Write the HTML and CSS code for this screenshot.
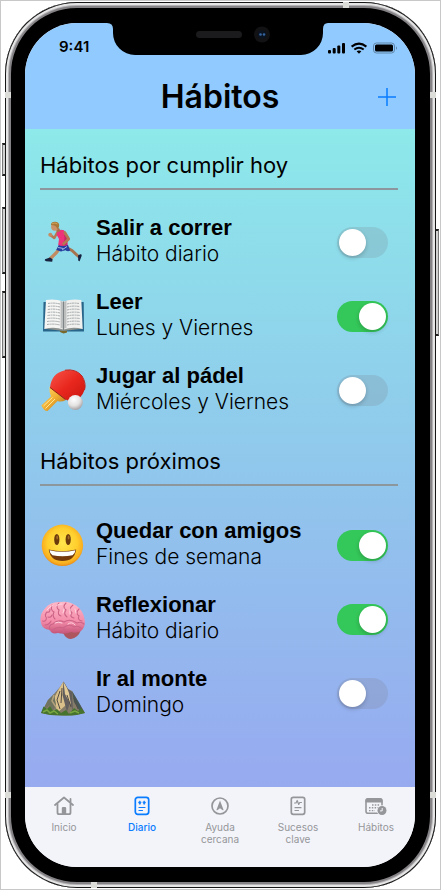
FILE: index.html
```html
<!DOCTYPE html>
<html lang="es">
<head>
<meta charset="utf-8">
<meta name="viewport" content="width=device-width, initial-scale=1">
<title>Hábitos</title>
<link rel="stylesheet" href="styles.css">
</head>
<body>
<div class="phone">
  <span class="key key-mute"></span>
  <span class="key key-up"></span>
  <span class="key key-down"></span>
  <span class="key key-power"></span>
  <span class="band band-top"></span>
  <span class="band band-bottom"></span>
  <span class="band band-left-a"></span>
  <span class="band band-left-b"></span>
  <span class="band band-right-a"></span>
  <span class="band band-right-b"></span>

  <div class="screen">
    <header class="header">
      <div class="status">
        <time class="clock">9:41</time>
        <svg class="notch" viewBox="0 0 222 32" aria-hidden="true">
          <path d="M1 0Q7 0 7 6V10A22 22 0 0 0 29 32H195A22 22 0 0 0 217 10V6Q217 0 222 0Z" fill="#000"/>
          <rect x="90" y="8" width="46" height="7" rx="3.500" fill="#1b1b1d"/>
          <circle cx="156" cy="11.500" r="8" fill="#121214"/>
          <circle cx="156" cy="11.500" r="4" fill="#0a1322"/>
          <circle cx="154.500" cy="11.500" r="1.300" fill="#36649c"/>
          <circle cx="158" cy="11.500" r="1.300" fill="#36649c"/>
        </svg>
        <svg class="signals" viewBox="0 0 70 12" aria-hidden="true">
          <rect x="0" y="8" width="3" height="3.500" rx="1"/>
          <rect x="4.700" y="6" width="3" height="5.500" rx="1"/>
          <rect x="9.300" y="3.500" width="3" height="8" rx="1"/>
          <rect x="14" y="1" width="3" height="10.500" rx="1"/>
          <g fill="none" stroke="#000" stroke-width="2">
            <path d="M23.600 4.600Q31-1.400 38.400 4.600"/>
            <path d="M26.300 7.500Q31 3.900 35.700 7.500"/>
          </g>
          <path d="M28.600 9.300Q31 7.500 33.400 9.300L31 11.800Z"/>
          <rect x="45.500" y="1" width="21" height="10" rx="3" fill="none" stroke="#5f86a8"/>
          <rect x="47" y="2.500" width="18" height="7" rx="1.500"/>
          <path d="M68 4.200Q70 6 68 7.800Z" fill="#5f86a8"/>
        </svg>
      </div>
      <div class="titlebar">
        <h1>Hábitos</h1>
        <button class="add" type="button" aria-label="Añadir hábito">
          <svg viewBox="0 0 18 18"><path d="M9 0V18M0 9H18" stroke="#0a7cff" stroke-width="1.500"/></svg>
        </button>
      </div>
    </header>

    <main class="content">
      <section class="today">
        <h2>Hábitos por cumplir hoy</h2>
        <ul class="habits">
          <li class="habit">
            <svg class="emoji" viewBox="0 -1 46 46" aria-hidden="true">
              <g fill="none" stroke-linecap="round" stroke-linejoin="round">
                <path d="M26.500 27.500L32 30.500L38.500 36.500" stroke="#a87450" stroke-width="3"/>
                <path d="M19.500 28.500L16.500 32.500L10 39" stroke="#c18a60" stroke-width="3.200"/>
                <path d="M17.500 12L14.300 18L11 15.500" stroke="#b57a53" stroke-width="2.600"/>
              </g>
              <path d="M38 35.500L40.200 34.300Q42 33.600 41.600 36L39.600 41.300Q37.800 41.500 38.200 39Z" fill="#17223f"/>
              <path d="M10 37.600L12.600 39.300L12.200 41.700L6 41.200Q4 40.300 5 39.200Z" fill="#17223f"/>
              <path d="M19 24.500L28 25L30.200 30.500Q28 32 25.500 30.300L21 31.500L16.200 30Z" fill="#263f9f"/>
              <path d="M18 27.500L23.500 28.500M22 30L27 26.500" stroke="#9fb5e5" stroke-width="1"/>
              <path d="M17 11.200Q20 8.700 24 10.200L27.200 15.500L27.500 25Q23 27 18.200 25L19 19L16.700 15Z" fill="#ed3379"/>
              <path d="M24 15Q25.500 20 22 25.500L27.400 25L27 15Z" fill="#c9286a"/>
              <path d="M24.800 12.500L28.700 19L23.700 23.700" fill="none" stroke="#b47953" stroke-width="2.800" stroke-linecap="round" stroke-linejoin="round"/>
              <circle cx="10.300" cy="14.800" r="2" fill="#c58b63"/>
              <path d="M15.500 9L19 8L20.500 11L17.500 12.500Z" fill="#a96f4c"/>
              <ellipse cx="14.700" cy="6.700" rx="3.600" ry="4.100" fill="#cc936a"/>
              <path d="M11 5Q11 1.500 15.500 1.700Q20 2 19 7L17.300 9.300Q16.500 5 11 5Z" fill="#a87838"/>
              <path d="M12 3.800Q15 2 17.500 4" stroke="#d1a458" fill="none"/>
            </svg>
            <label class="text" for="correr"><b>Salir a correr</b><span>Hábito diario</span></label>
            <input class="switch" type="checkbox" id="correr">
          </li>
          <li class="habit">
            <svg class="emoji" viewBox="0 -1 46 46" aria-hidden="true">
              <path d="M3.500 8L43.700 8L44 37.500L27 37.500Q23.500 39.500 20 37.500L3 37.500Z" fill="#28658a"/>
              <path d="M20 36.500H27V38.500L23.500 39.500L20 38Z" fill="#7a692c"/>
              <path d="M4.300 34.800L7 31.500H40.500L42.700 34.800L25 36.800H22Z" fill="#8c928f"/>
              <path d="M6 6Q15 4.500 23.500 7.500V35.500Q14 32.500 4.300 35Z" fill="#f5f5f3"/>
              <path d="M41.300 6Q32 4.500 23.500 7.500V35.500Q33 32.500 42.700 35Z" fill="#f0f0ee"/>
              <path d="M20.500 7Q23 7 23.500 9Q24 7 26.500 7V34Q24 34 23.500 36Q23 34 20.500 34Z" fill="#bdbfbf"/>
              <path d="M23.500 7.500V36" stroke="#7e8587" stroke-width="1"/>
              <path d="M8 9.500Q14 8.500 20 10M7.900 12.500Q14 11.500 20 13M7.800 15.500Q14 14.500 20 16M7.600 18.500Q14 17.500 20 19M7.500 21.500Q14 20.500 20 22M7.300 24.500Q14 23.500 20 25M7.100 27.500Q14 26.500 20 28M7 30.500Q14 29.500 20 31M27 10Q33 8.500 39 9.500M27 13Q33 11.500 39.200 12.500M27 16Q33 14.500 39.400 15.500M27 19Q33 17.500 39.500 18.500M27 22Q33 20.500 39.700 21.500M27 25Q33 23.500 39.800 24.500M27 28Q33 26.500 40 27.500M27 31Q33 29.500 40 30.500" fill="none" stroke="#a4a9ab" stroke-width="1" stroke-dasharray="2.500 .6 1.500 .5"/>
            </svg>
            <label class="text" for="leer"><b>Leer</b><span>Lunes y Viernes</span></label>
            <input class="switch" type="checkbox" id="leer" checked>
          </li>
          <li class="habit">
            <svg class="emoji" viewBox="0 -1 46 46" aria-hidden="true">
              <defs>
                <linearGradient id="rubber" x1="0" y1="0" x2="1" y2="1"><stop offset="0" stop-color="#f6564b"/><stop offset=".5" stop-color="#e9281f"/><stop offset="1" stop-color="#c8150f"/></linearGradient>
                <linearGradient id="wood" x1="0" y1="0" x2="1" y2="1"><stop offset="0" stop-color="#ffdf72"/><stop offset=".5" stop-color="#f1b033"/><stop offset="1" stop-color="#a96413"/></linearGradient>
                <radialGradient id="ball" cx=".4" cy=".3" r=".7"><stop offset="0" stop-color="#fff"/><stop offset=".6" stop-color="#e4e1e1"/><stop offset="1" stop-color="#a9a3a5"/></radialGradient>
              </defs>
              <path d="M9.500 18.500L26 32Q21 34.500 17.500 33L7.500 43Q4.500 43.500 1.300 37.500L11 28.500Q9 24 9.500 18.500Z" fill="url(#wood)"/>
              <path d="M3.500 38L12.500 29.500M5.500 40.500L15 31" stroke="#ffe795" stroke-width="1"/>
              <path d="M10 19.500Q11.500 5 25 2.200Q36 .5 42 8Q46.500 15.500 44.500 22Q41.500 30.500 35 32Q30 34 25.500 31.500Z" fill="url(#rubber)"/>
              <path d="M10 19.500L25.500 31.500" stroke="#8d2516" stroke-width="1"/>
              <path d="M25 2.200Q36 .5 42 8Q46.500 15.500 44.500 22" fill="none" stroke="#bf2822" stroke-width="1"/>
              <circle cx="35.300" cy="34.500" r="7.500" fill="url(#ball)"/>
            </svg>
            <label class="text" for="padel"><b>Jugar al pádel</b><span>Miércoles y Viernes</span></label>
            <input class="switch" type="checkbox" id="padel">
          </li>
        </ul>
      </section>

      <section class="upcoming">
        <h2>Hábitos próximos</h2>
        <ul class="habits">
          <li class="habit">
            <svg class="emoji" viewBox="0 -1 46 46" aria-hidden="true">
              <defs><radialGradient id="face" cx=".5" cy=".45" r=".55"><stop offset="0" stop-color="#ffe64c"/><stop offset=".65" stop-color="#ffcf2d"/><stop offset=".9" stop-color="#f9ad20"/><stop offset="1" stop-color="#e98b15"/></radialGradient></defs>
              <circle cx="22.400" cy="22.300" r="20.700" fill="url(#face)"/>
              <ellipse cx="16.800" cy="16.500" rx="2.600" ry="5.600" fill="#6b3b0c"/>
              <ellipse cx="28.200" cy="16.500" rx="2.600" ry="5.600" fill="#6b3b0c"/>
              <ellipse cx="17.200" cy="14.500" rx=".9" ry="2" fill="#a36a28"/>
              <ellipse cx="28.600" cy="14.500" rx=".9" ry="2" fill="#a36a28"/>
              <path d="M8.700 26.500Q22.400 30 36.200 26.500Q34.500 38 22.400 38Q10.500 38 8.700 26.500Z" fill="#743a0b"/>
              <path d="M9.500 27.200Q22.400 30.300 35.400 27.200Q35 31 32.500 32.300Q22.400 34 12.500 32.300Q10 31 9.500 27.200Z" fill="#fff"/>
            </svg>
            <label class="text" for="amigos"><b>Quedar con amigos</b><span>Fines de semana</span></label>
            <input class="switch" type="checkbox" id="amigos" checked>
          </li>
          <li class="habit">
            <svg class="emoji" viewBox="0 -1 46 46" aria-hidden="true">
              <defs><linearGradient id="cortex" x1="0" y1="0" x2="0" y2="1"><stop offset="0" stop-color="#ffb9c9"/><stop offset=".6" stop-color="#f48dab"/><stop offset="1" stop-color="#c45478"/></linearGradient></defs>
              <path d="M24 32Q32 29 41 33Q38 41 31 42Q26 42 23 36Z" fill="#ad5660"/>
              <path d="M1 26Q-1 18 4.500 12Q10 4.500 20 5Q29 3.500 36 8.500Q43 13 44.500 22Q46 30 41 34Q36 37 31 35Q25 38 18 36Q11 37.500 10 33Q2 32 1 26Z" fill="url(#cortex)"/>
              <path d="M2.500 24Q6 25 6.500 21Q4 18 7 15Q10 16 10 12M12 8Q10 13 14 15Q12 19 15 22M19 6Q15 10 19 13Q17 18 21 19M26 6Q22 10 26 13Q23 17 27 20M33 8Q28 12 32 16Q29 20 34 21M39 12Q35 16 39 19Q37 23 42 24M10 33Q8 28 13 27Q18 22 24 25Q30 21 37 26Q41 24 44 27M12 33Q18 29 23 31Q29 26 34 30Q38 28 41 31M5 28Q9 28 11 24M8 20Q11 21 12 18M24 35Q22 33 25 32" fill="none" stroke="#cc6488" stroke-width="1.100" stroke-linecap="round"/>
              <path d="M7 13Q10 9 13 8M16 9Q19 6 22 7M23 16L24 12M30 17L30 12M36 16L35 12M15 26Q18 24 22 26M28 27Q32 24 35 28" fill="none" stroke="#ffd4de" stroke-width="1" stroke-linecap="round"/>
            </svg>
            <label class="text" for="reflexionar"><b>Reflexionar</b><span>Hábito diario</span></label>
            <input class="switch" type="checkbox" id="reflexionar" checked>
          </li>
          <li class="habit">
            <svg class="emoji" viewBox="0 -1 46 46" aria-hidden="true">
              <path d="M1 42L8 29L14 23L20 16L23.500 10.500L28 18L32 20L38 30L45 42Q35 45 23 44.500Q10 44.500 1 42Z" fill="#847b68"/>
              <path d="M23.500 10.500L19.500 17L14.500 26L17 42L26 34L24 22Z" fill="#d9bf89"/>
              <path d="M23.500 10.500L22.500 24L27 41L30 31L33 40L32 21L28 18Z" fill="#625f5e"/>
              <path d="M23.500 11L25 23L31 34L29 22L27 17Z" fill="#e3cb98"/>
              <path d="M32 20L34 31L41 42L44.500 41.500L38 30Z" fill="#465757"/>
              <path d="M14 23L8 29L3 39L10 34L12 41L16 34Z" fill="#70735f"/>
              <path d="M14 24L12 30L16 36" fill="none" stroke="#b4a27c" stroke-width="1.500"/>
              <path d="M20 20L17 29L20 38M22 17L21 32M27 24L31 36M34 27L38 38" fill="none" stroke="#554d45" stroke-width="1"/>
              <path d="M1 42L3.500 35.500L7 38L10 35L13 40L17 38L21 42L26 39L29 43L34 37L38 40L41 37L45 42Q36 45 23 44.500Q9 44.500 1 42Z" fill="#46732d"/>
              <path d="M3 41L7 39L10 42L14 40L18 43M30 42L35 40L39 42" fill="none" stroke="#78a641" stroke-width="1.500"/>
            </svg>
            <label class="text" for="monte"><b>Ir al monte</b><span>Domingo</span></label>
            <input class="switch" type="checkbox" id="monte">
          </li>
        </ul>
      </section>
    </main>

    <nav class="tabs">
      <a class="tab" href="#inicio">
        <svg viewBox="0 0 20 20" aria-hidden="true"><g fill="none" stroke="currentColor" stroke-width="1.800" stroke-linecap="round" stroke-linejoin="round"><path d="M1 9L10 1.500L19 9"/><path d="M3.500 8V16.500Q3.500 18.200 5 18.200H15Q16.500 18.200 16.500 16.500V8"/><path d="M16.500 3V6"/></g><path d="M7.800 18V12Q7.800 11 9 11H11Q12.200 11 12.200 12V18Z" fill="currentColor"/></svg>
        <span>Inicio</span>
      </a>
      <a class="tab current" href="#diario" aria-current="page">
        <svg viewBox="0 0 20 20" aria-hidden="true"><g fill="none" stroke="currentColor" stroke-width="1.700" stroke-linecap="round"><rect x="3.300" y="1.300" width="13.400" height="17" rx="2.500"/><path d="M7 11.500H13M7 14.500H10.500" stroke-width="1.200"/></g><path d="M7.800 4.800L8.300 5.800L9.300 6.300L8.500 7L8.300 8.200H7.300L7.100 7L6.300 6.300L7.300 5.800ZM12.200 4.800L12.700 5.800L13.700 6.300L12.900 7L12.700 8.200H11.700L11.500 7L10.700 6.300L11.700 5.800Z" fill="currentColor" stroke="currentColor" stroke-width=".6"/></svg>
        <span>Diario</span>
      </a>
      <a class="tab" href="#ayuda">
        <svg viewBox="0 0 20 20" aria-hidden="true"><circle cx="10" cy="10" r="8" fill="none" stroke="currentColor" stroke-width="1.700"/><path d="M10 4.500L13.500 13.700Q13.500 14.500 12.700 14.200L10 12.300L7.300 14.200Q6.500 14.500 6.500 13.700Z" fill="currentColor"/></svg>
        <span>Ayuda cercana</span>
      </a>
      <a class="tab" href="#sucesos">
        <svg viewBox="0 0 20 20" aria-hidden="true"><g fill="none" stroke="currentColor" stroke-width="1.700" stroke-linecap="round" stroke-linejoin="round"><rect x="3.300" y="1.300" width="13.400" height="17" rx="2"/><path d="M6.500 7H8L9.200 4.500L10.700 8.500L11.700 6.500H13.500M7 11.700H13M7 14.500H10.500" stroke-width="1.200"/></g></svg>
        <span>Sucesos clave</span>
      </a>
      <a class="tab" href="#habitos">
        <svg class="wide" viewBox="0 0 22 20" aria-hidden="true"><rect x="1" y="2.900" width="16" height="14.400" rx="2" fill="none" stroke="currentColor" stroke-width="1.600"/><path d="M.5 6.500V4.500Q.5 2.200 2.800 2.200H15.200Q17.500 2.200 17.500 4.500V6.500Z" fill="currentColor"/><path d="M7 9H15M4 11.800H13M4 14.600H10" stroke="currentColor" stroke-width="1.400" stroke-dasharray="1.500 1.300"/><circle cx="17" cy="14.500" r="5.200" fill="#f3f4f9"/><circle cx="17" cy="14.500" r="4.500" fill="currentColor"/><path d="M17.200 12V14.900H15" fill="none" stroke="#f3f4f9" stroke-width="1"/></svg>
        <span>Hábitos</span>
      </a>
    </nav>
  </div>
</div>
</body>
</html>
```
FILE: styles.css
```css
* {
  box-sizing: border-box;
}

body {
  margin: 0;
  min-height: 100vh;
  display: flex;
  padding: 1px 4px 1px 4px;
  border: 1px solid #c8c8c8;
  background: #fff;
  color: #000;
  font-family: Inter, "Liberation Sans", sans-serif;
}

.phone {
  position: relative;
  flex: 1;
  display: flex;
  padding: 21px 21px 21px 20px;
  border-radius: 72px;
  background: #000;
  box-shadow:
    inset 0 0 0 1px #161616,
    inset 0 0 0 3px #e6e6e6,
    inset 0 0 0 4px #b4b2b4,
    inset 0 0 0 6px #858285;
}

/* Side buttons and antenna bands of the case */
.key {
  position: absolute;
  left: -3px;
  width: 3px;
  border: solid #222;
  border-width: 2px 0 2px 1px;
  border-left-color: #777;
  background: #d2d2d2;
}

.key-mute { top: 141px; height: 33px; }
.key-up { top: 205px; height: 67px; }
.key-down { top: 289px; height: 67px; }

.key-power {
  left: auto;
  right: -3px;
  top: 227px;
  height: 107px;
  border-width: 2px 1px 2px 0;
  border-right-color: #777;
}

.band {
  position: absolute;
  width: 6px;
  height: 6px;
  background: #dcdcd8;
}

.band-top { top: 0; right: 87px; }
.band-bottom { bottom: 0; left: 86px; }
.band-left-a { left: 0; top: 90px; }
.band-left-b { left: 0; bottom: 90px; }
.band-right-a { right: 0; top: 90px; }
.band-right-b { right: 0; bottom: 90px; }

.screen {
  flex: 1;
  display: flex;
  flex-direction: column;
  overflow: hidden;
  border-radius: 52px;
  background: #f3f4f9;
}

.header {
  height: 106px;
  background: #90cafe;
}

.status {
  display: grid;
  grid-template-columns: 1fr 222px 1fr;
  height: 42px;
}

.clock {
  padding: 15px 0 0 34px;
  font-size: 15px;
  line-height: 18px;
  font-weight: 600;
}

.notch {
  width: 222px;
  height: 32px;
}

.signals {
  justify-self: end;
  width: 70px;
  height: 12px;
  margin: 19px 17px 0 0;
  overflow: visible;
}

.titlebar {
  display: grid;
  grid-template-columns: 42px 1fr 42px;
  align-items: center;
  height: 64px;
}

h1 {
  grid-column: 2;
  margin: 0;
  text-align: center;
  font-size: 32px;
  line-height: 40px;
  font-weight: 600;
}

.add {
  display: flex;
  width: 24px;
  padding: 3px;
  margin-left: 2px;
  border: 0;
  background: none;
}

.add svg {
  width: 18px;
  height: 18px;
}

.content {
  flex: 1;
  padding: 23px 17px 24px 15px;
  background: linear-gradient(#8de9ea, #90c8ec 50%, #97aaf0);
}

h2 {
  margin: 0;
  padding-bottom: 10px;
  border-bottom: 2px solid #8b979c;
  font-size: 22px;
  line-height: 26px;
  font-weight: 400;
}

.habits {
  display: grid;
  gap: 20px;
  margin: 0;
  padding: 25px 10px 0 0;
  list-style: none;
}

.upcoming {
  padding-top: 31px;
}

.upcoming .habits {
  padding-top: 32px;
}

.habit {
  display: flex;
  align-items: center;
  gap: 10px;
}

.emoji {
  flex: none;
  width: 46px;
  height: 46px;
}

.text {
  flex: 1;
  display: grid;
  padding-bottom: 2px;
  font-size: 22px;
  line-height: 26px;
}

.text b {
  font-family: "Liberation Sans", Arial, sans-serif;
  font-weight: 700;
}

.text span {
  font-size: 21px;
  font-weight: 300;
}

.switch {
  appearance: none;
  flex: none;
  display: flex;
  width: 51px;
  height: 31px;
  margin: 0;
  padding: 2px;
  border-radius: 16px;
  background: rgba(120, 120, 128, 0.2);
}

.switch::before {
  content: "";
  width: 27px;
  height: 27px;
  border-radius: 50%;
  background: #fff;
  box-shadow: 0 2px 4px rgba(0, 0, 0, 0.2);
}

.switch:checked {
  justify-content: flex-end;
  background: #34c759;
}

.tabs {
  display: grid;
  grid-template-columns: repeat(5, 1fr);
  height: 80px;
  padding-top: 9px;
  background: #f3f4f9;
}

.tab {
  display: flex;
  flex-direction: column;
  align-items: center;
  gap: 5px;
  color: #95969a;
  font-size: 10px;
  line-height: 12px;
  text-align: center;
  text-decoration: none;
}

.tab svg {
  width: 20px;
  height: 20px;
}

.tab .wide {
  width: 22px;
}

.tab span {
  max-width: 50px;
}

.tab.current {
  color: #0a7cff;
  font-weight: 500;
}
```
